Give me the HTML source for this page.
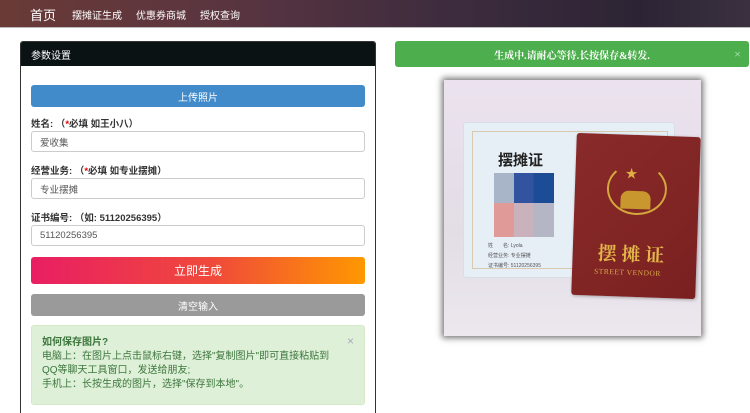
<!DOCTYPE html>
<html><head><meta charset="utf-8"><style>
*{box-sizing:border-box;margin:0;padding:0}
html,body{width:750px;height:413px;overflow:hidden}
body{background:#fff;font-family:"Liberation Sans","Noto Sans CJK SC",sans-serif;font-size:10px;color:#333;position:relative}
.nav{position:absolute;left:0;top:0;width:750px;height:28px;background:linear-gradient(90deg,#6a3a36 0%,#5a3540 30%,#3d2c3e 60%,#2c2434 85%,#3a3040 100%);border-bottom:1px solid #bbb}
.nav span{position:absolute;color:#fff;top:7px;font-size:10px}
.panel{position:absolute;left:20px;top:41px;width:356px;height:372px;border:1px solid #333;border-bottom:none;border-radius:3px 3px 0 0;overflow:hidden}
.ph{height:24px;background:#0a1214;color:#fff;padding:0 10px;font-size:10px;display:flex;align-items:center}
.abs{position:absolute}
.btn{position:absolute;left:10px;width:334px;border-radius:3px;color:#fff;display:flex;align-items:center;justify-content:center}
.lbl{position:absolute;left:10px;font-weight:bold;font-size:9.5px;color:#333}
.inp{position:absolute;left:10px;width:334px;height:21px;border:1px solid #ccc;border-radius:3px;padding:0 8px;color:#555;font-size:9.5px;display:flex;align-items:center}
.red{color:#e00}
</style></head><body>
<div class="nav"><span style="left:30px;top:5px;font-size:13px">首页</span><span style="left:72px">摆摊证生成</span><span style="left:136px">优惠券商城</span><span style="left:200px">授权查询</span></div>
<div class="panel">
<div class="ph">参数设置</div>
<div class="btn" style="top:43px;height:22px;background:#428bca">上传照片</div>
<div class="lbl" style="top:74px">姓名: （<span class="red">*</span>必填 如王小八）</div>
<div class="inp" style="top:89px">爱收集</div>
<div class="lbl" style="top:121px">经营业务: （<span class="red">*</span>必填 如专业摆摊）</div>
<div class="inp" style="top:136px">专业摆摊</div>
<div class="lbl" style="top:168px">证书编号: （如: 51120256395）</div>
<div class="inp" style="top:183px">51120256395</div>
<div class="btn" style="top:215px;height:27px;font-size:12px;background:linear-gradient(90deg,#e91e63,#f04a3a 55%,#ff9800)">立即生成</div>
<div class="btn" style="top:252px;height:22px;background:#9a9a9a">清空输入</div>
<div class="abs" style="left:10px;top:283px;width:334px;height:80px;background:#dff0d8;border:1px solid #d6e9c6;border-radius:3px;color:#3c763d;padding:10px 20px 0 10px;font-size:10px;line-height:14px">
<b>如何保存图片?</b><span style="position:absolute;right:10px;top:8px;color:#aab;font-size:12px">×</span><br>
电脑上：在图片上点击鼠标右键，选择"复制图片"即可直接粘贴到QQ等聊天工具窗口，发送给朋友;<br>手机上：长按生成的图片，选择"保存到本地"。</div>
</div>
<div class="abs" style="left:395px;top:41px;width:354px;height:26px;background:#4cae4c;border-radius:3px;color:#fff;font-weight:bold;display:flex;align-items:center;justify-content:center;font-family:'Liberation Serif','Noto Serif CJK SC',serif">生成中.请耐心等待.长按保存&amp;转发.<span style="position:absolute;right:8px;top:6px;color:#9d9;font-size:12px">×</span></div>
<div class="abs" style="left:444px;top:80px;width:257px;height:256px;box-shadow:0 0 6px 2px rgba(0,0,0,.55);background:linear-gradient(180deg,#ebe2ee,#e3dde6 60%,#ece8ee);overflow:hidden">
<div class="abs" style="left:19px;top:42px;width:212px;height:156px;background:#e6eef6;border:1px solid #d8dde6;border-radius:3px">
<div class="abs" style="left:8px;top:8px;width:196px;height:138px;border:1px solid #d9c9b0"></div>
<div class="abs" style="left:34px;top:26px;font-size:15px;font-weight:bold;color:#222">摆摊证</div>
<div class="abs" style="left:30px;top:50px;width:60px;height:58px;background:linear-gradient(90deg,#a8b4c8 33%,#3254a0 33% 66%,#1c4c96 66%);"></div>
<div class="abs" style="left:30px;top:80px;width:60px;height:34px;background:linear-gradient(90deg,#e09a98 33%,#c9b2bc 33% 66%,#b4b6c6 66%)"></div>
<div class="abs" style="left:24px;top:118px;font-size:5px;color:#555;line-height:10px">姓　　名: Lyola<br>经营业务: 专业摆摊<br>证书编号: 51120256395</div>
</div>
<div class="abs" style="left:130px;top:55px;width:124px;height:162px;background:linear-gradient(135deg,#8a2a2a,#7a2020);border-radius:3px;transform:rotate(2deg);box-shadow:1px 1px 3px rgba(0,0,0,.3)">
<div class="abs" style="left:32px;top:28px;width:60px;height:52px;border:2px solid #d4a83a;border-radius:50%;border-top-color:transparent"></div>
<div class="abs" style="left:50px;top:30px;color:#e0b040;font-size:12px">★</div>
<div class="abs" style="left:46px;top:56px;width:30px;height:18px;background:#c8982e;border-radius:8px 8px 0 0"></div>
<div class="abs" style="left:25px;top:105px;color:#e3b64a;font-size:19px;font-weight:bold;font-family:'Noto Serif CJK SC',serif">摆 摊 证</div>
<div class="abs" style="left:22px;top:133px;color:#d7a84a;font-size:7.5px;letter-spacing:.5px;font-family:'Liberation Serif',serif">STREET VENDOR</div>
</div>
</div>
</body></html>
